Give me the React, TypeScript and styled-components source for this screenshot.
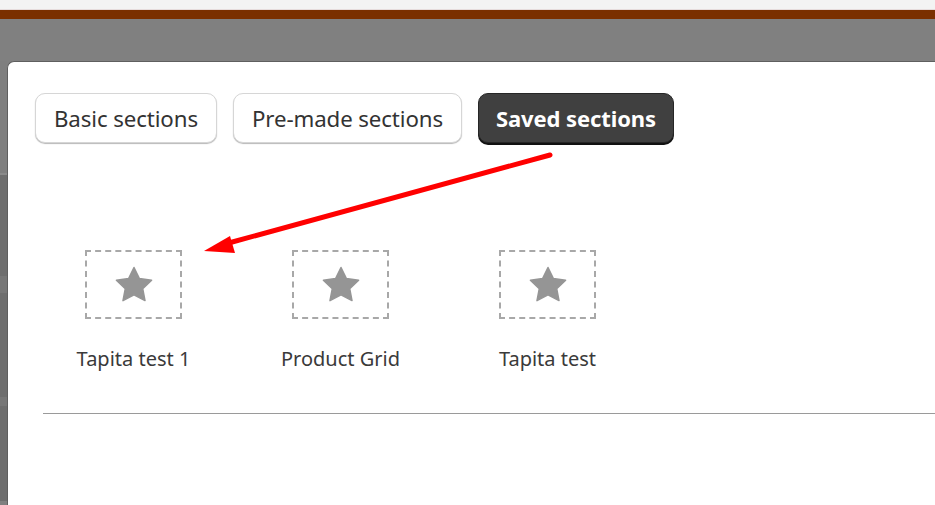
import React from "react";
import styled, { createGlobalStyle } from "styled-components";

const Global = createGlobalStyle`
  html, body { margin: 0; padding: 0; }
  body { width: 935px; height: 505px; overflow: hidden; font-family: "Noto Sans", "Open Sans", sans-serif; background: #f3f3f3; }
`;

const Page = styled.div`
  position: relative;
  width: 935px;
  height: 505px;
  display: flex;
  flex-direction: column;
`;

const TopStrip = styled.div`
  height: 10px;
  background: #f3f3f3;
  border-bottom: 1px solid #e6dcdc;
  box-sizing: border-box;
`;

const BrownBar = styled.div`
  height: 9px;
  background: #7a3000;
`;

const Backdrop = styled.div`
  flex: 1;
  display: flex;
  background: #808080;
  min-height: 0;
`;

const LeftStrip = styled.div`
  width: 7px;
  margin-top: 42px;
  display: flex;
  flex-direction: column;
`;

const Band = styled.div<{ $h: number; $c: string }>`
  height: ${(p) => p.$h}px;
  background: ${(p) => p.$c};
  flex: none;
`;

const Modal = styled.div`
  flex: 1;
  margin-top: 42px;
  background: #fff;
  border-top: 1px solid #5f5f5f;
  border-left: 1px solid #5f5f5f;
  border-top-left-radius: 7px;
  box-sizing: border-box;
  display: flex;
  flex-direction: column;
`;

const Tabs = styled.div`
  display: flex;
  gap: 16px;
  padding: 31px 0 0 27px;
`;

const Tab = styled.button<{ $active?: boolean }>`
  height: 50px;
  padding: 0 ${(p) => (p.$active ? 17 : 18)}px;
  box-sizing: border-box;
  border-radius: 10px;
  font-family: "Noto Sans", "Open Sans", sans-serif;
  font-size: ${(p) => (p.$active ? 22 : 22.25)}px;
  letter-spacing: -0.1px;
  cursor: pointer;
  background: ${(p) => (p.$active ? "#404040" : "#fff")};
  color: ${(p) => (p.$active ? "#fff" : "#333")};
  font-weight: ${(p) => (p.$active ? 700 : 400)};
  border: 1px solid ${(p) => (p.$active ? "#262626" : "#d6d6d6")};
  box-shadow: ${(p) => (p.$active ? "0 2px 0 #111" : "0 1px 1px #b8b8b8")};
`;

const Items = styled.div`
  display: flex;
  padding: 107px 0 0 22px;
`;

const Item = styled.div`
  width: 207px;
  display: flex;
  flex-direction: column;
  align-items: center;
`;

const Thumb = styled.div`
  width: 97px;
  height: 69px;
  box-sizing: border-box;
  border: 2px dashed #a8a8a8;
  display: flex;
  align-items: center;
  justify-content: center;
`;

const Label = styled.div`
  margin-top: 27px;
  font-size: 20px;
  color: #3a3a3a;
  line-height: 26px;
`;

const Divider = styled.div`
  margin: 41px 0 0 35px;
  height: 1px;
  background: #9a9a9a;
`;

const ArrowLayer = styled.svg`
  position: absolute;
  left: 0;
  top: 0;
  pointer-events: none;
`;

const Star = () => (
  <svg width="40" height="38" viewBox="0 0 40 38">
    <path
      d="M20 1.5 L25.4 12.6 L37.6 14.2 L28.7 22.6 L31 34.6 L20 28.8 L9 34.6 L11.3 22.6 L2.4 14.2 L14.6 12.6 Z"
      fill="#959595"
      stroke="#959595"
      strokeWidth="1.5"
      strokeLinejoin="round"
    />
  </svg>
);

const items = ["Tapita test 1", "Product Grid", "Tapita test"];

export default function App() {
  return (
    <>
      <Global />
      <Page>
        <TopStrip />
        <BrownBar />
        <Backdrop>
          <LeftStrip>
            <Band $h={112} $c="#7f7f7f" />
            <Band $h={2} $c="#8a8a8a" />
            <Band $h={101} $c="#6e6e6e" />
            <Band $h={17} $c="#777777" />
            <Band $h={104} $c="#6e6e6e" />
            <Band $h={9} $c="#777777" />
            <Band $h={95} $c="#6e6e6e" />
          </LeftStrip>
          <Modal>
            <Tabs>
              <Tab>Basic sections</Tab>
              <Tab>Pre-made sections</Tab>
              <Tab $active>Saved sections</Tab>
            </Tabs>
            <Items>
              {items.map((t) => (
                <Item key={t}>
                  <Thumb>
                    <Star />
                  </Thumb>
                  <Label>{t}</Label>
                </Item>
              ))}
            </Items>
            <Divider />
          </Modal>
        </Backdrop>
        <ArrowLayer width="935" height="505" viewBox="0 0 935 505">
          <line x1="550" y1="155" x2="225" y2="244" stroke="#ff0000" strokeWidth="5" strokeLinecap="round" />
          <polygon points="204,251 230,236 235,253" fill="#ff0000" />
        </ArrowLayer>
      </Page>
    </>
  );
}
